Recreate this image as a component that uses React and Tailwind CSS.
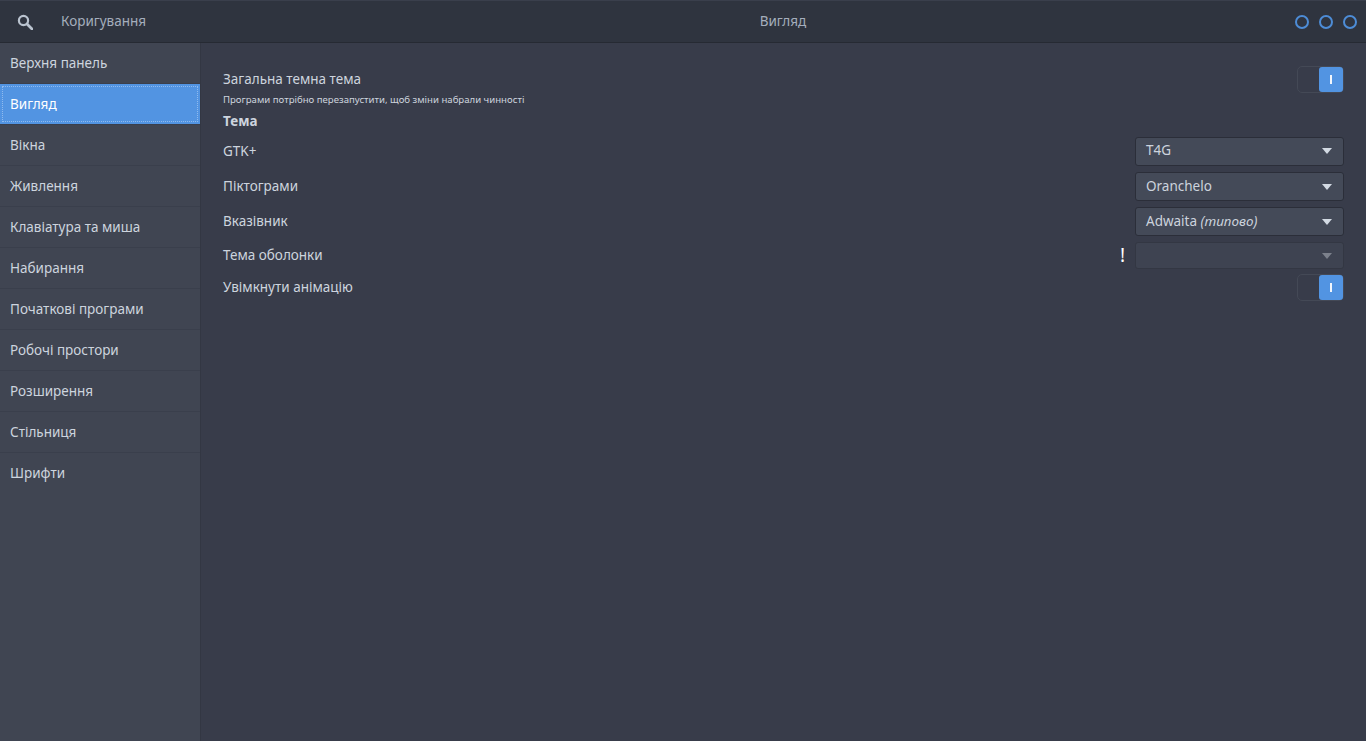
import React from "react";

const items = ["Верхня панель","Вигляд","Вікна","Живлення","Клавіатура та миша","Набирання","Початкові програми","Робочі простори","Розширення","Стільниця","Шрифти"];

function Toggle() {
  return (
    <div className="flex h-[27px] w-[47px] rounded-[5px] border border-[#444956] bg-[#383c4a] items-stretch">
      <div className="flex-1" />
      <div className="w-[24px] rounded-[3px] bg-[#5294e2] flex items-center justify-center">
        <div className="w-[2px] h-[9px] bg-[#f2f6fc]" />
      </div>
    </div>
  );
}

function Combo({ children, disabled }) {
  return (
    <div className={"flex items-center justify-between w-[209px] rounded-[3px] border pl-[10px] pr-[10px] " + (disabled ? "h-[27px] bg-[#3e4351] border-[#333743]" : "h-[29px] bg-[#444a58] border-[#2b2e39]")}>
      <span className="text-[#ccd3dd] leading-none">{children}</span>
      <svg width="12" height="6" viewBox="0 0 12 6"><path d="M1 0h10L6 6z" fill={disabled ? "#7c818c" : "#d3dae3"} /></svg>
    </div>
  );
}

export default function App() {
  return (
    <div className="w-[1366px] h-[741px] overflow-hidden flex flex-col bg-[#383c4a] text-[13.5px] text-[#cdd4de] font-['Noto_Sans','Open_Sans',sans-serif]">
      <header className="h-[43px] shrink-0 grid grid-cols-[200px_100px_1fr_100px] items-center bg-[#2f343f] border-t border-t-[#3a3f4c] border-b border-b-[#262a33]">
        <div className="flex items-center">
          <svg className="ml-[17px]" width="16" height="16" viewBox="0 0 16 16" fill="none" stroke="#bac3cf" strokeWidth="2.2">
            <circle cx="6.5" cy="6.5" r="4.6" />
            <path d="M10 10l5 5" strokeWidth="2.8" strokeLinecap="round" />
          </svg>
          <span className="ml-[28px] text-[#a5aebc]">Коригування</span>
        </div>
        <div />
        <div className="text-center text-[#a5aebc]">Вигляд</div>
        <div className="flex justify-end gap-[10px] pr-[9px]">
          {[0,1,2].map(i => <div key={i} className="w-[14px] h-[14px] rounded-full border-2 border-[#4d8cd6]" />)}
        </div>
      </header>
      <div className="flex flex-1 min-h-0">
        <aside className="w-[201px] shrink-0 bg-[#404552] border-r border-r-[#333743]">
          {items.map((t, i) => i === 1 ? (
            <div key={t} className="h-[41px] bg-[#5294e2] p-[2px] text-white border-b border-b-[#3a3f4c]">
              <div className="h-full border border-dotted border-[#8fbaee] pl-[7px] flex items-center">{t}</div>
            </div>
          ) : (
            <div key={t} className={"h-[41px] pl-[10px] flex items-center " + (i === items.length - 1 ? "" : "border-b border-b-[#3a3f4c]")}>{t}</div>
          ))}
        </aside>
        <main className="flex-1 pl-[22px] pr-[22px] pt-[23px]">
          <div className="flex justify-between h-[46px]">
            <div>
              <div className="leading-[26px]">Загальна темна тема</div>
              <div className="text-[9.6px] leading-[12px] mt-[2px]">Програми потрібно перезапустити, щоб зміни набрали чинності</div>
            </div>
            <Toggle />
          </div>
          <div className="font-bold leading-[18px]">Тема</div>
          <div className="mt-[4px] flex flex-col">
            <div className="flex items-center justify-between h-[34px] mb-[1px]"><span>GTK+</span><Combo>T4G</Combo></div>
            <div className="flex items-center justify-between h-[35px]"><span>Піктограми</span><Combo>Oranchelo</Combo></div>
            <div className="flex items-center justify-between h-[35px]"><span>Вказівник</span><Combo>Adwaita <i>(типово)</i></Combo></div>
            <div className="flex items-center justify-between h-[33px]">
              <span>Тема оболонки</span>
              <div className="flex items-center gap-[10px]">
                <span className="text-white font-normal text-[19px] leading-none">!</span>
                <Combo disabled> </Combo>
              </div>
            </div>
            <div className="flex items-center justify-between h-[27px] mt-[2px]"><span>Увімкнути анімацію</span><Toggle /></div>
          </div>
        </main>
      </div>
    </div>
  );
}
